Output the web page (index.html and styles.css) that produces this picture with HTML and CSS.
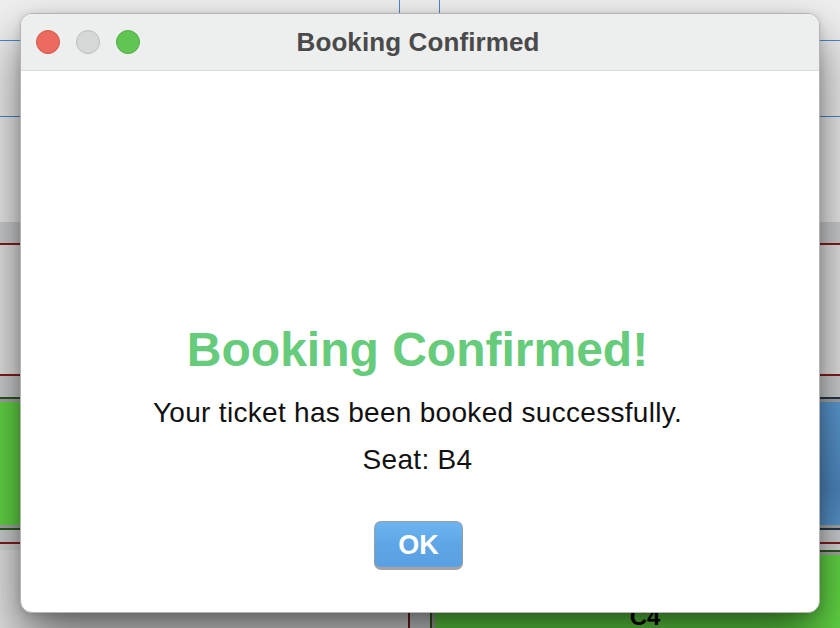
FILE: index.html
```html
<!DOCTYPE html>
<html lang="en">
<head>
<meta charset="utf-8">
<title>Booking Confirmed</title>
<link rel="stylesheet" href="styles.css">
</head>
<body>
<div class="app">
  <div class="row r1">
    <div class="cell cell-a"></div>
    <div class="cell cell-b"></div>
    <div class="cell cell-c"></div>
  </div>
  <div class="row r2"></div>
  <div class="row r3"></div>
  <div class="row header-band"></div>
  <div class="row r5"></div>
  <div class="seat-row row-b">
    <div class="seat seat-green seat-first"></div>
    <div class="seat seat-blue seat-last"></div>
  </div>
  <div class="seat-row row-c">
    <div class="aisle"><div class="divider"></div></div>
    <div class="seat seat-green seat-c4">C4</div>
  </div>
</div>

<div class="dialog">
  <div class="titlebar">
    <div class="lights">
      <span class="light light-red"></span>
      <span class="light light-gray"></span>
      <span class="light light-green"></span>
    </div>
    <div class="title">Booking Confirmed</div>
    <div class="spacer"></div>
  </div>
  <div class="content">
    <h1 class="heading">Booking Confirmed!</h1>
    <p class="line line-first">Your ticket has been booked successfully.</p>
    <p class="line line-second">Seat: B4</p>
    <button class="ok" type="button">OK</button>
  </div>
</div>
</body>
</html>
```

FILE: styles.css
```css
* { box-sizing: border-box; }

html, body {
  margin: 0;
  padding: 0;
  width: 840px;
  height: 628px;
  overflow: hidden;
  font-family: "Liberation Sans", Arial, sans-serif;
}

body { position: relative; background: #ebebeb; }

/* ---------- background application ---------- */
.app {
  width: 840px;
  height: 628px;
  overflow: hidden;
  background: #ebebeb;
}

.row { width: 100%; }

.r1 {
  display: flex;
  height: 41px;
  background: #efefef;
  border-bottom: 1px solid #4a89cb;
}
.cell { height: 100%; }
.cell-a { width: 400px; border-right: 1px solid #4a89cb; }
.cell-b { width: 40px; border-right: 1px solid #4a89cb; }
.cell-c { flex: 1; }

.r2 {
  height: 76px;
  background: #ececec;
  border-bottom: 1px solid #4a89cb;
}

.r3 { height: 105px; background: #ebebeb; }

.header-band {
  height: 23px;
  background: #cdcfd0;
  border-bottom: 2px solid #861c1c;
}

.r5 {
  height: 131px;
  background: #e4e4e4;
  border-bottom: 2px solid #861c1c;
}

.seat-row {
  display: flex;
  background: #cdd0d1;
}

.row-b {
  height: 168px;
  padding-top: 21px;
  border-bottom: 2px solid #861c1c;
}

.row-c {
  height: 120px;
  padding-top: 6px;
  background: #d6d8d9;
}

.seat {
  height: 133px;
  border: 2px solid #2d5a1e;
  box-shadow: inset 0 0 0 3px #a9a9a9;
  flex-shrink: 0;
}

.seat-green { background: #62d845; }

.seat-blue {
  background: linear-gradient(#5c9cd6, #4f89c1 70%, #5a97d0);
  border-color: #27364b;
}

.seat-first { width: 440px; margin-left: -20px; }
.seat-last { width: 440px; }

.aisle {
  width: 430px;
  flex-shrink: 0;
  display: flex;
}
.divider {
  width: 410px;
  border-right: 2px solid #7d1a1a;
  background: #e2e2e2;
}

.seat-c4 {
  width: 430px;
  display: flex;
  align-items: center;
  justify-content: center;
  font-weight: bold;
  font-size: 24px;
  color: #000;
}

/* ---------- dialog ---------- */
.dialog {
  position: absolute;
  left: 20px;
  top: 13px;
  width: 800px;
  height: 600px;
  background: #fff;
  border-radius: 12px;
  border: 1px solid #b4b4b4;
  box-shadow: 0 26px 50px rgba(0, 0, 0, 0.55), 0 2px 10px rgba(0, 0, 0, 0.15);
  overflow: hidden;
  display: flex;
  flex-direction: column;
}

.titlebar {
  height: 57px;
  flex-shrink: 0;
  background: #edeeee;
  border-bottom: 1px solid #dadbdb;
  display: grid;
  grid-template-columns: 1fr auto 1fr;
  align-items: center;
}

.lights {
  display: flex;
  gap: 16px;
  padding-left: 15px;
}

.light {
  width: 24px;
  height: 24px;
  border-radius: 50%;
  display: block;
}
.light-red { background: #ed6a5e; border: 1px solid #d35449; }
.light-gray { background: #d6d7d7; border: 1px solid #bcbdbd; }
.light-green { background: #61c554; border: 1px solid #4fae42; }

.title {
  font-size: 26px;
  font-weight: bold;
  color: #4a4a4a;
  letter-spacing: 0.1px;
  margin-right: 4px;
}

.content {
  flex: 1;
  display: flex;
  flex-direction: column;
  align-items: center;
  justify-content: flex-end;
  padding-bottom: 42px;
  padding-right: 5px;
}

.heading {
  margin: 0;
  font-size: 48px;
  line-height: 56px;
  font-weight: bold;
  color: #66cb7a;
}

.line {
  margin: 0;
  font-size: 28px;
  line-height: 34px;
  color: #111;
  letter-spacing: 0.3px;
}

.line-first { margin-top: 18px; }
.line-second { margin-top: 13px; }

.ok {
  margin-top: 44px;
  margin-left: 2px;
  width: 89px;
  height: 49px;
  border: 1px solid #9a9ea3;
  border-bottom: 3px solid #a2a4a6;
  border-radius: 7px;
  background: linear-gradient(#6db5f1, #5ea5e6 50%, #5aa0e2);
  color: #fff;
  font-family: "Liberation Sans", Arial, sans-serif;
  font-weight: bold;
  font-size: 27px;
  line-height: 1;
  padding: 0;
  padding-top: 1px;
}
```
